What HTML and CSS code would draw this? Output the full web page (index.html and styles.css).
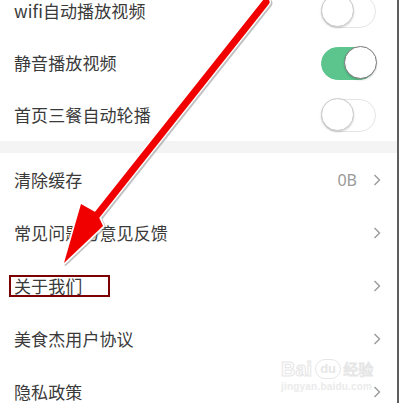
FILE: index.html
```html
<!DOCTYPE html>
<html lang="zh-CN">
<head>
<meta charset="utf-8">
<title>设置</title>
<link rel="stylesheet" href="styles.css">
</head>
<body>
<div class="screen">
  <div class="group group-top">
    <div class="row"><span class="label">wifi自动播放视频</span><span class="switch"><span class="knob"></span></span></div>
    <div class="row"><span class="label">静音播放视频</span><span class="switch on"><span class="knob"></span></span></div>
    <div class="row"><span class="label">首页三餐自动轮播</span><span class="switch"><span class="knob"></span></span></div>
  </div>
  <div class="gap"></div>
  <div class="group group-links">
    <div class="row"><span class="label">清除缓存</span><span class="value">0B</span><svg class="chev" width="8" height="12" viewBox="0 0 8 12"><path d="M1.5 1 L6.5 6 L1.5 11" fill="none" stroke="#9a9a9a" stroke-width="1.4"/></svg></div>
    <div class="row"><span class="label">常见问题与意见反馈</span><svg class="chev" width="8" height="12" viewBox="0 0 8 12"><path d="M1.5 1 L6.5 6 L1.5 11" fill="none" stroke="#9a9a9a" stroke-width="1.4"/></svg></div>
    <div class="row"><span class="label">关于我们</span><span class="mark"></span><svg class="chev" width="8" height="12" viewBox="0 0 8 12"><path d="M1.5 1 L6.5 6 L1.5 11" fill="none" stroke="#9a9a9a" stroke-width="1.4"/></svg></div>
    <div class="row"><span class="label">美食杰用户协议</span><svg class="chev" width="8" height="12" viewBox="0 0 8 12"><path d="M1.5 1 L6.5 6 L1.5 11" fill="none" stroke="#9a9a9a" stroke-width="1.4"/></svg></div>
    <div class="row"><span class="label">隐私政策</span><svg class="chev" width="8" height="12" viewBox="0 0 8 12"><path d="M1.5 1 L6.5 6 L1.5 11" fill="none" stroke="#9a9a9a" stroke-width="1.4"/></svg></div>
  </div>

  <div class="watermark">
    <div class="wm-top"><span class="wm-bai">Bai</span><span class="wm-du">du</span><span class="wm-jy">经验</span></div>
    <div class="wm-url">jingyan.baidu.com</div>
  </div>

  <svg class="arrow" width="399" height="403" viewBox="0 0 399 403">
    <g transform="translate(1.5,1.2)" opacity="0.45">
      <line x1="266" y1="2" x2="97" y2="215" stroke="#777" stroke-width="10" stroke-linecap="round"/>
      <polygon points="64,263 81,204 97,213 103,226" fill="#777" stroke="#777" stroke-width="3" stroke-linejoin="round"/>
    </g>
    <line x1="266" y1="2" x2="97" y2="215" stroke="#ffffff" stroke-width="10" stroke-linecap="round"/>
    <polygon points="64,263 81,204 97,213 103,226" fill="#ffffff" stroke="#ffffff" stroke-width="3.5" stroke-linejoin="round"/>
    <line x1="266" y1="2" x2="97" y2="215" stroke="#f10000" stroke-width="7" stroke-linecap="round"/>
    <polygon points="64,263 81,204 97,213 103,226" fill="#f10000"/>
  </svg>
</div>
</body>
</html>
```
FILE: styles.css
```css
html, body {
  margin: 0;
  padding: 0;
  background: #ffffff;
}

.screen {
  position: relative;
  width: 399px;
  height: 403px;
  overflow: hidden;
  box-sizing: border-box;
  border-right: 2px solid #5e5e5e;
  background: #ffffff;
  font-family: "Noto Sans CJK SC", "Noto Sans", sans-serif;
  color: #3a3a3a;
}

.group-top {
  margin-top: -15px;
}

.group-top .row {
  height: 52px;
}

.group-links .row {
  height: 53px;
}

.row {
  position: relative;
  display: flex;
  align-items: center;
  padding-left: 14px;
  box-sizing: border-box;
}

.label {
  font-size: 17px;
  line-height: 20px;
  letter-spacing: 0.1px;
}

.gap {
  height: 12px;
  background: #f4f4f4;
}

.switch {
  position: relative;
  margin-left: auto;
  margin-right: 21px;
  width: 55px;
  height: 33px;
  box-sizing: border-box;
  border-radius: 17px;
  border: 1.5px solid #e4e4e4;
  background: #ffffff;
}

.switch .knob {
  position: absolute;
  top: -1.5px;
  left: -1.5px;
  width: 33px;
  height: 33px;
  box-sizing: border-box;
  border-radius: 50%;
  background: #ffffff;
  border: 1px solid #c9c9c9;
  box-shadow: 0 1px 2px rgba(0, 0, 0, 0.18);
}

.switch.on {
  background: #5cc58d;
  border-color: #5cc58d;
}

.switch.on .knob {
  left: auto;
  right: -1.5px;
  border-color: #7a7a7a;
}

.value {
  margin-left: auto;
  font-size: 16px;
  color: #9a9a9a;
  font-family: "Noto Sans", "Noto Sans CJK SC", sans-serif;
}

.chev {
  margin-left: auto;
  margin-right: 16px;
  display: block;
}

.value + .chev {
  margin-left: 16px;
}

.mark {
  position: absolute;
  left: 9px;
  top: 16px;
  width: 101px;
  height: 22px;
  box-sizing: border-box;
  border: 2px solid #7d0000;
}

.arrow {
  position: absolute;
  left: 0;
  top: 0;
  pointer-events: none;
}

.watermark {
  position: absolute;
  left: 281px;
  top: 351px;
  color: #efefef;
  font-family: "Liberation Sans", sans-serif;
}

.wm-top {
  display: flex;
  align-items: flex-end;
  height: 28px;
}

.wm-bai {
  font-size: 20px;
  font-weight: bold;
  line-height: 20px;
  color: #ffffff;
  -webkit-text-stroke: 1px #e6e6e6;
}

.wm-du {
  margin-left: 3px;
  width: 26px;
  height: 20px;
  border-radius: 10px;
  border: 1px solid #e6e6e6;
  box-sizing: border-box;
  font-size: 13px;
  font-weight: bold;
  line-height: 18px;
  text-align: center;
  color: #e6e6e6;
}

.wm-jy {
  margin-left: 2px;
  font-family: "Noto Sans CJK SC", sans-serif;
  font-size: 15px;
  line-height: 20px;
  color: #ffffff;
  -webkit-text-stroke: 1px #e6e6e6;
}

.wm-url {
  margin-top: 2px;
  font-size: 10px;
  font-weight: bold;
  color: #ebebeb;
  letter-spacing: 0.2px;
}
```
